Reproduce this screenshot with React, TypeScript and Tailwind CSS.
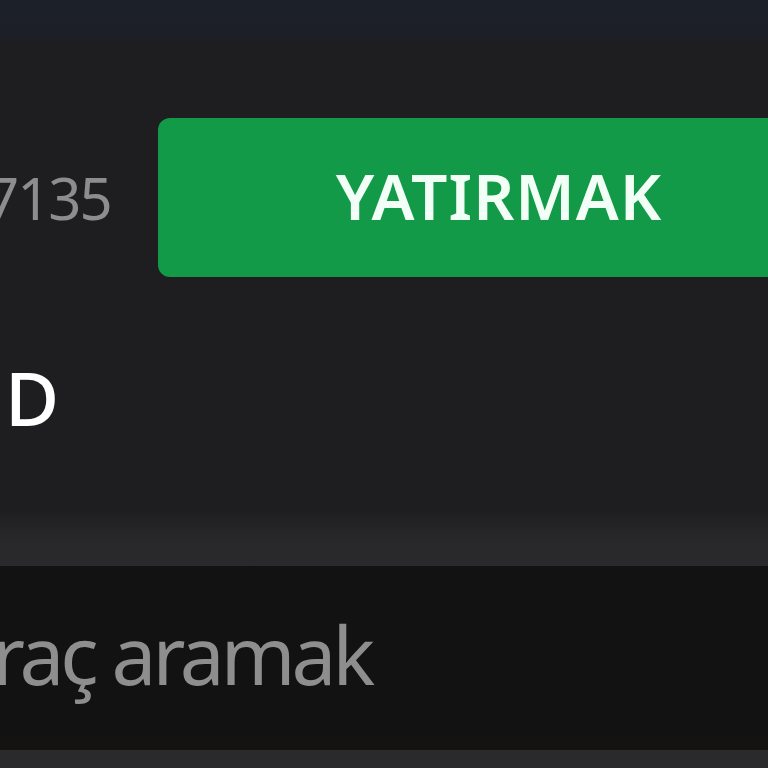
import React from "react";

export default function App() {
  const font = { fontFamily: '"Noto Sans", "Open Sans", sans-serif' };
  return (
    <div
      className="w-[768px] h-[768px] overflow-hidden flex flex-col bg-[#1e1e21]"
      style={font}
    >
      <div className="h-[40px] shrink-0 bg-gradient-to-b from-[#1b2029] to-[#1d1f27]" />
      <div className="flex-1 flex flex-col">
        <div className="flex items-center mt-[78px] h-[159px]">
          <div className="ml-[-14px] w-[172px] shrink-0 text-[58px] leading-none text-[#8d8d8f] tracking-[-2px]">
            7135
          </div>
          <div className="shrink-0 w-[682px] h-[159px] rounded-[12px] bg-[#139a48] flex items-center justify-center text-[#f2fff6] text-[64px] font-semibold tracking-[1px] pb-[4px]">
            YATIRMAK
          </div>
        </div>
        <div className="mt-[84px] pl-[5px] text-[74px] leading-none font-medium text-white">
          D
        </div>
      </div>
      <div className="h-[54px] shrink-0 bg-gradient-to-b from-[#1f1f22] via-[#28282a] to-[#2a2a2c]" />
      <div className="h-[169px] shrink-0 bg-[#121213] flex items-center">
        <div className="ml-[-8px] text-[80px] leading-none text-[#8e8e8e] tracking-[-4px] pt-[6px]">
          raç aramak
        </div>
      </div>
      <div className="h-[15px] shrink-0 bg-[#141312]" />
      <div className="h-[18px] shrink-0 bg-[#2a2a2c]" />
    </div>
  );
}
